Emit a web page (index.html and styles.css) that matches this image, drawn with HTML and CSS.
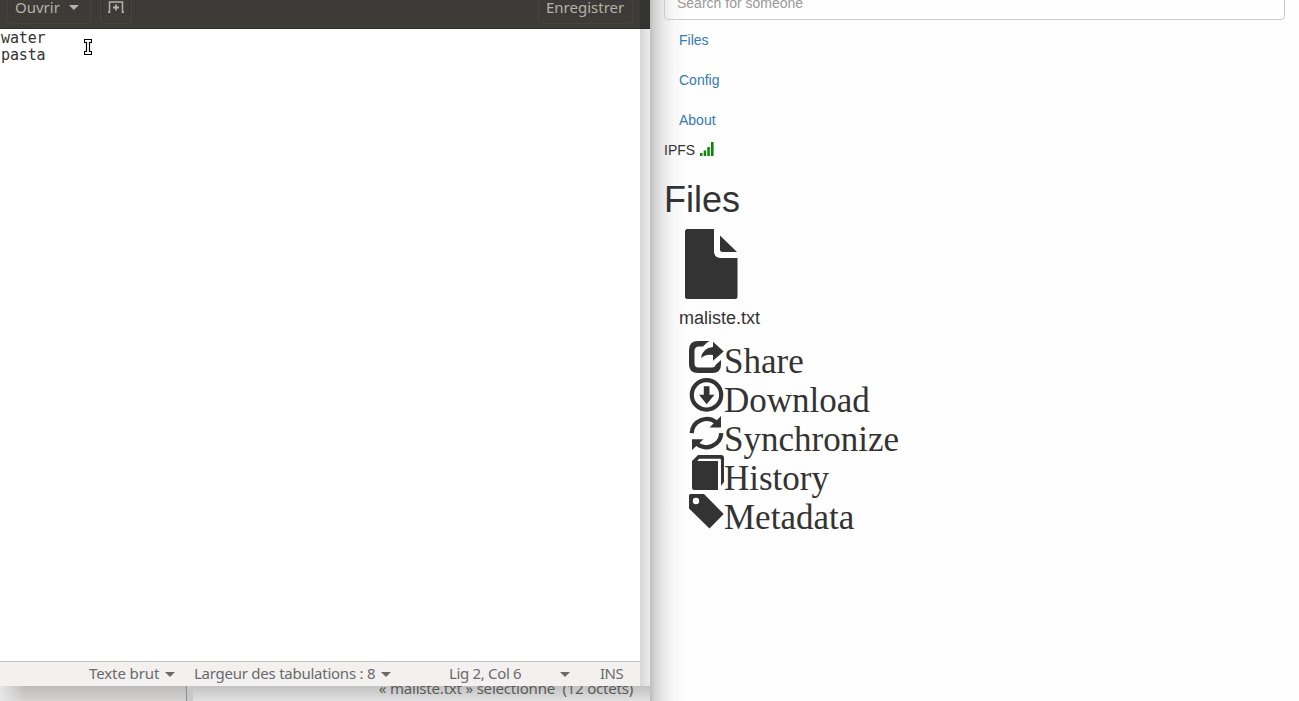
FILE: index.html
```
<!DOCTYPE html>
<html lang="fr">
<head>
<meta charset="utf-8">
<title>Files</title>
<link rel="stylesheet" href="styles.css">
</head>
<body>
<div class="desktop">
  <section class="left">
    <div class="manager-header"></div>
    <div class="manager-foot">
      <div class="sidebar"></div>
      <div class="manager-status"><span>« maliste.txt » sélectionné&nbsp; (12 octets)</span></div>
    </div>
    <div class="editor">
      <header class="toolbar">
        <div class="btn open"><span class="t-open">Ouvrir</span><i class="caret"></i></div>
        <div class="btn new">
          <svg width="16" height="14" viewBox="0 0 16 14" fill="none" stroke="#b5b2a9"><path d="M0 12.300H1.500V2H14.500V12.300H16" stroke-width="1.500"/><path d="M8 4.500V10.500M5 7.500H11" stroke-width="1.800"/></svg>
        </div>
        <div class="btn save"><span class="t-save">Enregistrer</span></div>
      </header>
      <div class="text">water<br>pasta</div>
      <footer class="status">
        <span class="s1">Texte brut</span><i class="caret"></i>
        <span class="s2">Largeur des tabulations : 8</span><i class="caret"></i>
        <span class="s3">Lig 2, Col 6</span><i class="caret"></i>
        <span class="s4">INS</span>
      </footer>
      <svg class="cursor" width="8" height="16" viewBox="0 0 8 16"><path d="M.5 .5H7.500V3.500H5.500V12.500H7.500V15.500H.5V12.500H2.500V3.500H.5Z" fill="#fff" stroke="#000" stroke-width="1.200"/></svg>
    </div>
  </section>
  <main class="page">
    <div class="search">Search for someone</div>
    <nav class="nav"><a>Files</a><a>Config</a><a>About</a></nav>
    <div class="ipfs"><span>IPFS</span>
      <svg width="14" height="14" viewBox="0 0 14 14" fill="#0a870a"><path d="M0 11h2.500v3H0zM3.700 8.500H6.200V14H3.700zM7.300 5h2.500v9H7.300zM11 0h2.600v14H11z"/></svg>
    </div>
    <h1>Files</h1>
    <div class="file">
      <svg width="53" height="70" viewBox="0 0 53 70" fill="#333"><path d="M2.500 0H29V23Q29.500 28.500 35 29H52.500V67.500Q52.500 70 50 70H2.500Q0 70 0 67.500V2.500Q0 0 2.500 0Z"/><path d="M35 6.500L52 23H37.500Q35 23 35 20.500Z"/></svg>
      <div class="name">maliste.txt</div>
    </div>
    <ul class="actions">
      <li><svg width="35" height="35" viewBox="0 0 35 35" fill="#333"><path d="M20.500 0H9Q0 0 0 9V23.500Q0 32 9 32H23.500Q32 32 32 23.500V19L26.500 24Q26 26.500 23 26.500H9.500Q5.500 26.500 5.500 22.500V10Q5.500 5.500 10 5.500H14Q16.500 2.200 20.500 0Z"/><path d="M24 .8L34.700 10.500L24 19.800V14Q17 12.500 12 17Q13.500 7 24 6Z"/></svg><span>Share</span></li>
      <li><svg width="35" height="35" viewBox="0 0 35 35" fill="#333"><circle cx="17.500" cy="14.900" r="14.700" fill="none" stroke="#333" stroke-width="4.200"/><path d="M14.800 6.300H20.500V14.800H25.500L17.700 24.300L10 14.800H14.800Z"/></svg><span>Download</span></li>
      <li><svg class="up" width="35" height="35" viewBox="0 0 35 35" fill="#333"><path d="M2.700 17.200A15 15 0 0 1 27.500 6.700M32.300 17.200A15 15 0 0 1 7.500 27.500" fill="none" stroke="#333" stroke-width="4.300"/><path d="M32 0V11.500H20.500ZM3 34V23.200H14.500Z"/></svg><span>Synchronize</span></li>
      <li><svg class="up" width="35" height="35" viewBox="0 0 35 35" fill="#333"><path d="M3 6L9 0H32Q35 0 35 3V27L32 31V5Q32 3.800 30.800 3.800H10.300L8.200 6H29V35H5Q3 35 3 33Z"/></svg><span>History</span></li>
      <li><svg class="up" width="35" height="35" viewBox="0 0 35 35" fill="#333"><path fill-rule="evenodd" d="M0 1.500Q0 0 1.500 0H15L34.700 20L20.500 34.500L0 14.500ZM7 3.800A3.200 3.200 0 1 0 7 10.200A3.200 3.200 0 1 0 7 3.800Z"/></svg><span>Metadata</span></li>
    </ul>
  </main>
</div>
</body>
</html>
```
FILE: styles.css
```
* { box-sizing: border-box; }
body { margin: 0; overflow: hidden; font-family: "Liberation Sans", Arial, sans-serif; font-size: 14px; line-height: 20px; color: #333; }
.desktop { display: grid; grid-template-columns: 650px 1fr; width: 1299px; height: 701px; overflow: hidden; }
.left { position: relative; overflow: hidden; height: 701px; background: linear-gradient(90deg, #d6d6d6 640px, #ececec 650px); display: flex; flex-direction: column; justify-content: space-between; font-family: "Noto Sans", sans-serif; }
.manager-header { height: 29px; background: #35332f; border-bottom: 1px solid #2b2a27; }
.manager-foot { display: flex; height: 15px; background: linear-gradient(#c2c2c2, #e0e0e0); }
.sidebar { width: 187px; border-right: 1px solid #8e8e8e; background: linear-gradient(90deg, #e6e6e6, transparent 25px), linear-gradient(#bcbbba, #d4d3d1); }
.manager-status { flex: 1; border-left: 6px solid #c8c8c8; display: flex; justify-content: flex-end; padding-right: 17px; color: #5a5a5a; font-size: 15px; white-space: nowrap; }
.manager-status span { margin-top: -8px; letter-spacing: -.2px; }
.editor { position: absolute; left: 0; top: 0; width: 640px; height: 686px; background: #fff; display: flex; flex-direction: column; }
.toolbar { height: 29px; flex: none; background: #3c3b37; border-bottom: 1px solid #2f2e2b; display: flex; padding: 0 7px; color: #b5b2a9; font-size: 15px; }
.btn { height: 24px; border: 1px solid #45443f; border-top: 0; border-radius: 0 0 5px 5px; display: flex; align-items: flex-start; white-space: nowrap; }
.btn span { margin-top: -3px; }
.open { width: 84px; padding-left: 7px; gap: 9px; }
.new { width: 32px; margin-left: 9px; padding-left: 7px; }
.save { width: 95px; margin-left: auto; padding-left: 7px; }
.caret { flex: none; width: 10px; height: 5px; margin-top: 5px; background: #b5b2a9; clip-path: polygon(0 0, 100% 0, 50% 100%); }
.text { flex: 1; padding: 1px 0 0 1px; font: 15px/17px "DejaVu Sans Mono", monospace; color: #333; letter-spacing: -.13px; }
.status { height: 25px; border-top: 1px solid #c5c3c0; background: #f2f1f0; color: #6a6a6a; font-size: 15px; line-height: 22px; display: flex; padding-left: 89px; white-space: nowrap; }
.status .caret { background: #6a6a6a; margin-top: 10px; }
.s1 { width: 76px; letter-spacing: -.1px; }
.s2 { width: 187px; margin-left: 19px; letter-spacing: -.25px; }
.s3 { width: 111px; margin-left: 58px; letter-spacing: -.33px; }
.s4 { margin-left: 30px; letter-spacing: -.5px; }
.cursor { position: absolute; left: 84px; top: 39px; }
.page { padding: 0 14px; background: linear-gradient(90deg, #bdbdbd 0, #d4d4d4 5px, #eaeaea 14px, #f8f8f8 24px, #fefefe 36px); }
.search { height: 34px; margin-top: -14px; border: 1px solid #ccc; border-radius: 4px; background: transparent; padding: 6px 12px; color: #999; }
.nav { display: flex; flex-direction: column; }
.nav a { padding: 10px 15px; color: #337ab7; }
.ipfs { display: flex; gap: 5px; height: 20px; }
.ipfs svg { margin-top: 2px; }
h1 { margin: 20px 0 9px; font-size: 36px; line-height: 40px; font-weight: 500; }
.file { padding-left: 15px; }
.file svg { display: block; margin-left: 6px; }
.name { font-size: 18px; line-height: 20px; margin-top: 9px; }
.actions { list-style: none; margin: 13px 0 0; padding: 0 0 0 25px; font: 35px/41px "Liberation Serif", serif; }
.actions li { height: 39px; display: flex; }
.actions svg { flex: none; overflow: visible; }
.actions .up { margin-top: -3px; }
```
